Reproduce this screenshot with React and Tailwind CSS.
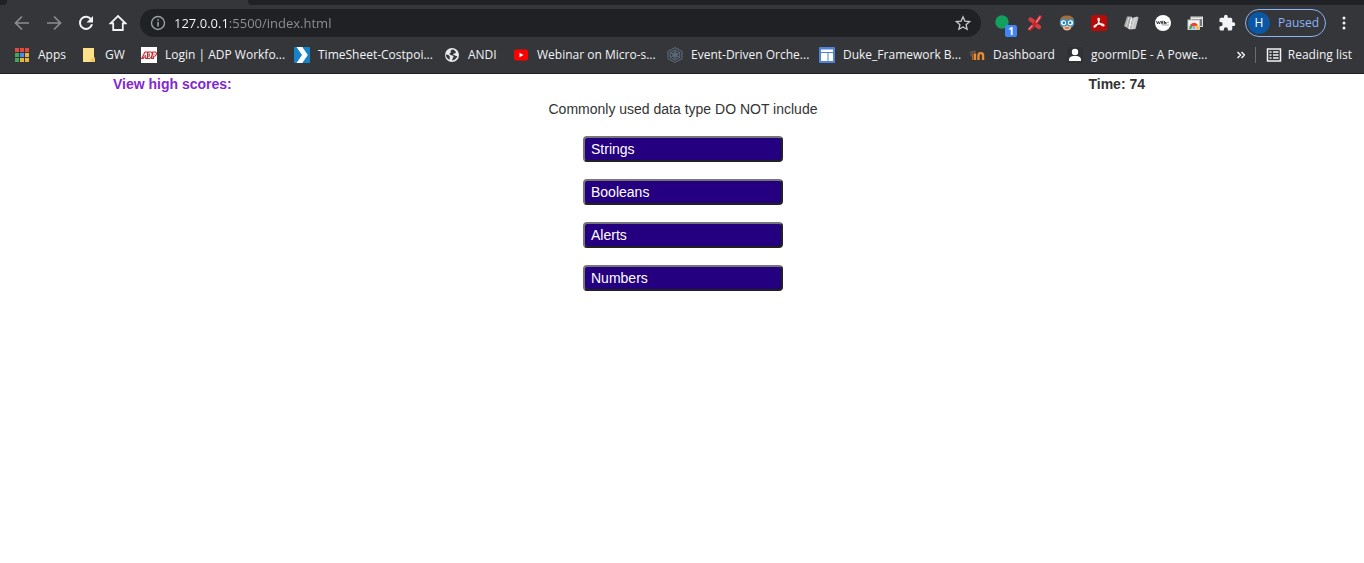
import React from "react";

const ANSWERS = ["Strings", "Booleans", "Alerts", "Numbers"];

function AppsIcon() {
  const rows = [["#e04a3f", "#e04a3f", "#e04a3f"], ["#3fa65a", "#4a8af4", "#e8b43a"], ["#3fa65a", "#e8b43a", "#e8b43a"]];
  return (
    <svg className="size-4" viewBox="0 0 16 16" aria-hidden="true">
      {rows.map((r, y) => r.map((c, x) => <rect key={`${x}${y}`} x={1 + x * 5} y={1 + y * 5} width="4" height="4" fill={c} />))}
    </svg>
  );
}

function FolderIcon() {
  return (
    <svg className="size-4" viewBox="0 0 16 16" aria-hidden="true">
      <path d="M2 1h11v9l1 1v4H2z" fill="#ffe08a" />
      <path d="M11 11h3v4h-5z" fill="#f3c85a" />
    </svg>
  );
}

function AdpIcon() {
  return (
    <svg className="size-4" viewBox="0 0 16 16" aria-hidden="true">
      <rect width="16" height="16" fill="#fff" />
      <g fill="none" stroke="#c9242b" strokeWidth="1.1">
        <path d="M.7 11.5 4 5h2.500v6.500H4.700V10H3l-.8 1.500zM3.600 8.600h1.200M7 5h2.500q2 0 1.600 2.500Q10.500 11.500 8 11.500H6.300zM8.500 6.600 7.900 10M11.800 5H14q1.800.2 1.300 2.300Q15 9.300 12.800 9.300l-.4 2.200h-1.700zM13 6.700v1" />
      </g>
    </svg>
  );
}

function ChevronTileIcon() {
  return (
    <svg className="size-4" viewBox="0 0 16 16" aria-hidden="true">
      <rect width="16" height="16" rx="1" fill="#1583c5" />
      <path d="M2.500 0h5.800l5.500 8-5.500 8H2.500L8 8z" fill="#fff" />
    </svg>
  );
}

function GlobeIcon() {
  return (
    <svg className="size-4" viewBox="0 0 16 16" aria-hidden="true">
      <circle cx="8" cy="8" r="7" fill="#e8eaed" />
      <path d="M8.800 2.500C6.500 3 6 4.600 7.300 5.500 5.300 5.700 5 7.300 6.500 7.900c1.500.5 2.700.1 3.100 1.300.3 1.200-1.600 1.700-1.400 4.300 2.400-.2 4.400-1.800 5.200-4.400-1.500.2-2-.7-3-.9-.8-.3-1.500-.4-1.300-1 .2-.7 2.400-.5 2.700-1.500.2-1-1-2.600-3-3.200z" fill="#35363a" />
      <path d="M1.800 7.500c2.200.2 3.500.8 3.900 2 .3 1-.2 1.700.2 3.200C3.400 11.900 1.900 10 1.800 7.500z" fill="#35363a" />
    </svg>
  );
}

function VideoIcon() {
  return (
    <svg className="size-4" viewBox="0 0 16 16" aria-hidden="true">
      <rect x="1" y="2.500" width="14" height="11" rx="2.200" fill="#f00" />
      <path d="M6.500 5.800v4.500l4-2.250z" fill="#fff" />
    </svg>
  );
}

function HexIcon() {
  return (
    <svg className="size-4" viewBox="0 0 16 16" fill="none" stroke="#66758a" strokeWidth=".9" aria-hidden="true">
      <path d="M8 .6 15 4.300v7.400l-7 3.700-7-3.700V4.300z" />
      <path d="M8 3 12.700 5.500v5L8 13l-4.700-2.500v-5zM8 3v10M3.300 5.500l9.400 5M12.700 5.500l-9.400 5" />
      <circle cx="8" cy="8" r="2.300" />
    </svg>
  );
}

function SitesIcon() {
  return (
    <svg className="size-4" viewBox="0 0 16 16" aria-hidden="true">
      <rect width="16" height="16" rx="1" fill="#4f83d8" />
      <path d="M2 2.500h12V5H2zM2 6h6.500v8H2zM9.500 6H14v8H9.500z" fill="#fff" />
    </svg>
  );
}

function MoodleIcon() {
  return (
    <svg className="size-4" viewBox="0 0 16 16" fill="none" aria-hidden="true">
      <path d="M.5 5.500 6 4v1.500L2 6.500v3" stroke="#6d5a4c" strokeWidth="1.200" />
      <path d="M6 13V6.500M9.500 13V8.500q0-2.300 2.300-2.300t2.300 2.300V13" stroke="#ef8a32" strokeWidth="2.300" />
      <path d="M3.700 7v6" stroke="#a4622c" strokeWidth="1.500" />
    </svg>
  );
}

function PersonIcon() {
  return (
    <svg className="size-4" viewBox="0 0 16 16" aria-hidden="true">
      <rect width="16" height="16" rx="1" fill="#303134" />
      <circle cx="8" cy="5" r="3.200" fill="#fff" />
      <path d="M2 14v-1.500q0-3 4-3.500h4q4 .5 4 3.500V14z" fill="#fff" />
    </svg>
  );
}

const BOOKMARKS = [
  { label: "Apps", icon: AppsIcon, width: "w-[67px]" },
  { label: "GW", icon: FolderIcon, width: "w-[60px]" },
  { label: "Login | ADP Workfo...", icon: AdpIcon, width: "w-[153px]" },
  { label: "TimeSheet-Costpoi...", icon: ChevronTileIcon, width: "w-[150px]" },
  { label: "ANDI", icon: GlobeIcon, width: "w-[69px]" },
  { label: "Webinar on Micro-s...", icon: VideoIcon, width: "w-[154px]" },
  { label: "Event-Driven Orche...", icon: HexIcon, width: "w-[152px]" },
  { label: "Duke_Framework B...", icon: SitesIcon, width: "w-[150px]" },
  { label: "Dashboard", icon: MoodleIcon, width: "w-[98px]" },
  { label: "goormIDE - A Powe...", icon: PersonIcon, width: "w-[150px]" },
];

function ToolButton({ label, children }) {
  return (
    <button type="button" aria-label={label} className="flex h-8 w-8 shrink-0 items-center justify-center">
      {children}
    </button>
  );
}

function Extensions() {
  return (
    <div className="flex shrink-0">
      <button type="button" aria-label="Status extension, 1 new" className="relative flex h-8 w-8 shrink-0 items-center justify-center">
        <svg className="size-4" viewBox="0 0 16 16" aria-hidden="true">
          <circle cx="7" cy="7" r="6.700" fill="#12a05c" />
        </svg>
        <span className="absolute right-[2px] bottom-[2px] h-3 w-3 rounded-xs bg-[#4285f4] text-center text-[10px] leading-3 font-bold text-white">1</span>
      </button>
      <ToolButton label="Marker extension">
        <svg className="size-4" viewBox="0 0 16 16" fill="none" aria-hidden="true">
          <path d="M3.500 4.500Q6 5.500 7.500 8t4.500 4" stroke="#d83a41" strokeWidth="4.200" strokeLinecap="round" />
          <path d="M13 2 9 7.500 3 14" stroke="#c4262e" strokeWidth="3.600" strokeLinecap="round" />
          <path d="m13 2-3.500 5M5 11l-3 3" stroke="#ef8589" strokeWidth="1.400" strokeLinecap="round" />
        </svg>
      </ToolButton>
      <ToolButton label="Owl extension">
        <svg className="size-4" viewBox="0 0 16 16" aria-hidden="true">
          <path d="M1 6q0-5.500 7-5.500T15 6l-1 6H2z" fill="#a66e35" />
          <path d="M3.500 7h9v5q-1 3.500-4.500 3.500T3.500 12z" fill="#e8bd91" />
          <circle cx="4.500" cy="7.700" r="3.200" fill="#fff" stroke="#3792cf" strokeWidth="1.300" />
          <circle cx="11.500" cy="7.700" r="3.200" fill="#fff" stroke="#3792cf" strokeWidth="1.300" />
          <circle cx="4.800" cy="7.700" r="1.300" fill="#2275ae" />
          <circle cx="11.200" cy="7.700" r="1.300" fill="#2275ae" />
          <path d="M6 13h4" stroke="#9d5130" />
        </svg>
      </ToolButton>
      <ToolButton label="PDF extension">
        <svg className="size-4" viewBox="0 0 16 16" aria-hidden="true">
          <rect width="16" height="16" rx="2.500" fill="#b80b08" />
          <path d="M7.600 3.200c1.600 0 .5 3.500-1.300 6.300-1.400 2.200-3 3.200-3.300 2.300-.4-1.500 3.500-2.800 6.500-2.900 3.700-.1 4.500 2 2.800 2C9.800 10.900 6.300 5.500 7 3.800q.1-.6.600-.6z" fill="none" stroke="#fff" strokeWidth="1.100" />
        </svg>
      </ToolButton>
      <ToolButton label="Pages extension">
        <svg className="size-4" viewBox="0 0 16 16" aria-hidden="true">
          <path d="M4 1.500h4L5 13.500 1 11z" fill="#a7a7a7" />
          <path d="M8 1.500 9.500 3 7 14.500l-2-1z" fill="#f0f0f0" />
          <path d="M9.500 3 14 1.500l1.500 1L12.500 14 7 14.500z" fill="#c6c6c6" />
          <path d="m12 2.500-3 11.500M6 2 3 12" stroke="#e0e0e0" strokeWidth=".9" />
        </svg>
      </ToolButton>
      <ToolButton label="Web extension">
        <svg className="size-4" viewBox="0 0 16 16" aria-hidden="true">
          <circle cx="8" cy="8" r="8" fill="#fff" />
          <path d="m1.500 6 1 3 1-2.500 1 2.500 1-3M8.500 6.300H6.700v2.500h1.800M6.700 7.500h1.600M9.500 6v2.800h1.600V7.500H9.500" fill="none" stroke="#333" strokeWidth=".9" />
          <path d="M7 10h7M11.500 7.500h2.500" stroke="#8a8a8a" strokeWidth=".7" />
        </svg>
      </ToolButton>
      <ToolButton label="Screens extension">
        <svg className="size-4" viewBox="0 0 16 16" aria-hidden="true">
          <rect x="4" y="2" width="11.500" height="9.500" fill="#777" stroke="#dedede" />
          <path d="M4 3.300h11.500" stroke="#eee" strokeWidth="1.500" />
          <rect x="1" y="5" width="11.500" height="9.500" fill="#f4f4f4" stroke="#c4c4c4" />
          <path d="M2.200 14q-.2-3 1.500-4.500L7 13v1z" fill="#34a853" />
          <path d="M3 10q4-4.500 8 0L7 12z" fill="#ea4335" />
          <path d="M10.500 9.500q1.600 2 1 4.500H7z" fill="#fbbc05" />
          <path d="M4.800 14a2.200 2.200 0 0 1 4.400 0z" fill="#4285f4" stroke="#fff" strokeWidth=".7" />
        </svg>
      </ToolButton>
      <ToolButton label="Extensions">
        <svg className="h-[18px] w-[18px]" viewBox="0 0 24 24" fill="#f1f3f4" aria-hidden="true">
          <path d="M20.500 11H19V7a2 2 0 0 0-2-2h-4V3.500a2.500 2.500 0 0 0-5 0V5H4a2 2 0 0 0-2 2v3.800h1.500a2.700 2.700 0 0 1 0 5.400H2V20a2 2 0 0 0 2 2h3.800v-1.500a2.700 2.700 0 0 1 5.400 0V22H17a2 2 0 0 0 2-2v-4h1.500a2.500 2.500 0 0 0 0-5z" />
        </svg>
      </ToolButton>
    </div>
  );
}

function Toolbar() {
  return (
    <div className="flex h-9 items-center pl-[6px] pr-1">
      <ToolButton label="Back">
        <svg className="size-4" viewBox="0 0 16 16" fill="none" stroke="#8b8d91" strokeWidth="1.700" aria-hidden="true"><path d="M15 8H2M8 1.500 1.500 8 8 14.500" /></svg>
      </ToolButton>
      <ToolButton label="Forward">
        <svg className="size-4" viewBox="0 0 16 16" fill="none" stroke="#8b8d91" strokeWidth="1.700" aria-hidden="true"><path d="M1 8h13M8 1.500 14.500 8 8 14.500" /></svg>
      </ToolButton>
      <ToolButton label="Reload">
        <svg className="size-4" viewBox="0 0 16 16" fill="none" aria-hidden="true">
          <path d="M13.200 4.500A6.100 6.100 0 1 0 14 9.200" stroke="#f1f3f4" strokeWidth="2" />
          <path d="M15 1v6.500H8.500z" fill="#f1f3f4" />
        </svg>
      </ToolButton>
      <ToolButton label="Home">
        <svg className="h-[18px] w-[18px]" viewBox="0 0 18 18" fill="none" stroke="#f1f3f4" strokeWidth="1.800" aria-hidden="true"><path d="M1.500 9.300 9 2l7.500 7.300h-2.700V16H4.200V9.300z" /></svg>
      </ToolButton>
      <div className="ml-[6px] mr-[6px] flex h-7 min-w-0 flex-1 items-center rounded-full bg-[#202124] pl-[10px] pr-[10px]">
        <svg className="size-4 shrink-0" viewBox="0 0 16 16" fill="none" stroke="#9aa0a6" strokeWidth="1.400" aria-hidden="true">
          <circle cx="8" cy="8" r="6.500" /><path d="M8 7v4.500M8 4.200v1.600" strokeWidth="1.600" />
        </svg>
        <input
          aria-label="Address"
          defaultValue="127.0.0.1:5500/index.html"
          className="ml-2 h-5 min-w-0 flex-1 bg-[linear-gradient(to_right,#ffffff_55px,#8f9297_55px)] bg-clip-text text-[13px] leading-5 text-transparent outline-none"
        />
        <button type="button" aria-label="Bookmark this page" className="shrink-0">
          <svg className="size-4" viewBox="0 0 16 16" fill="none" stroke="#c4c7cb" strokeWidth="1.300" aria-hidden="true"><path d="m8 1.800 1.900 4.300 4.700.5-3.500 3.100 1 4.600L8 11.900l-4.100 2.400 1-4.600-3.500-3.100 4.700-.5z" /></svg>
        </button>
      </div>
      <Extensions />
      <button type="button" className="ml-[2px] mr-[2px] flex h-7 w-[81px] shrink-0 items-center rounded-full border border-[#8ab4f8] pl-[2px] text-[#8ab4f8]">
        <span className="flex h-[22px] w-[22px] items-center justify-center rounded-full bg-[#0b57a4] text-xs text-white">H</span>
        <span className="ml-2 text-xs">Paused</span>
      </button>
      <ToolButton label="Menu">
        <svg className="size-4" viewBox="0 0 16 16" fill="#f1f3f4" aria-hidden="true"><circle cx="8" cy="3" r="1.500" /><circle cx="8" cy="8" r="1.500" /><circle cx="8" cy="13" r="1.500" /></svg>
      </ToolButton>
    </div>
  );
}

function BookmarksBar() {
  return (
    <nav aria-label="Bookmarks" className="flex h-8 items-start pl-[14px] pr-3 text-xs text-[#f1f3f4]">
      <div className="flex h-7 min-w-0 flex-1 items-center overflow-hidden">
        {BOOKMARKS.map(({ label, icon: Icon, width }) => (
          <a key={label} href="#" className={`flex shrink-0 items-center gap-2 whitespace-nowrap ${width}`}>
            <Icon />
            <span>{label}</span>
          </a>
        ))}
      </div>
      <div className="flex h-7 shrink-0 items-center">
        <button type="button" aria-label="More bookmarks" className="flex w-5 items-center justify-center">
          <svg className="h-2 w-2" viewBox="0 0 8 8" fill="none" stroke="#f1f3f4" strokeWidth="1.500" aria-hidden="true"><path d="m.5 1 3 3-3 3M4.500 1l3 3-3 3" /></svg>
        </button>
        <span className="ml-1 mr-[10px] h-4 w-px bg-[#6b6d72]" />
        <button type="button" className="flex items-center gap-[6px] whitespace-nowrap">
          <svg className="size-4" viewBox="0 0 16 16" fill="none" stroke="#f1f3f4" strokeWidth="1.500" aria-hidden="true">
            <rect x="1.500" y="2" width="13" height="12" /><path d="M3.500 5h2M3.500 8h2M3.500 11h2M7 5h5.500M7 8h5.500M7 11h5.500" />
          </svg>
          Reading list
        </button>
      </div>
    </nav>
  );
}

export default function App() {
  return (
    <div className="min-h-screen bg-white">
      <header className="border-b border-[#202124] bg-[#35363a] font-['Open_Sans',sans-serif]">
        <div className="flex h-[5px]">
          <div className="w-[7px] rounded-br bg-[#202124]" />
          <div className="w-[241px]" />
          <div className="flex-1 rounded-bl bg-[#202124]" />
        </div>
        <Toolbar />
        <BookmarksBar />
      </header>
      <main className="pl-[2px] font-['Liberation_Sans',Arial,sans-serif] text-sm leading-5 text-[#333333]">
        <div className="mx-auto flex max-w-[1140px] justify-between pr-[108px] font-bold">
          <a href="#" className="text-[#8228cf]">View high scores:</a>
          <p>Time: 74</p>
        </div>
        <section className="mt-[5px] flex flex-col items-center">
          <h1>Commonly used data type DO NOT include</h1>
          <div className="mt-[17px] flex w-[200px] flex-col gap-[17px]">
            {ANSWERS.map((answer) => (
              <button key={answer} type="button" className="h-[26px] rounded border-2 border-t-[#767676] border-l-[#767676] border-r-[#212121] border-b-[#212121] bg-[#240080] px-[6px] text-left text-white">
                {answer}
              </button>
            ))}
          </div>
        </section>
      </main>
    </div>
  );
}
